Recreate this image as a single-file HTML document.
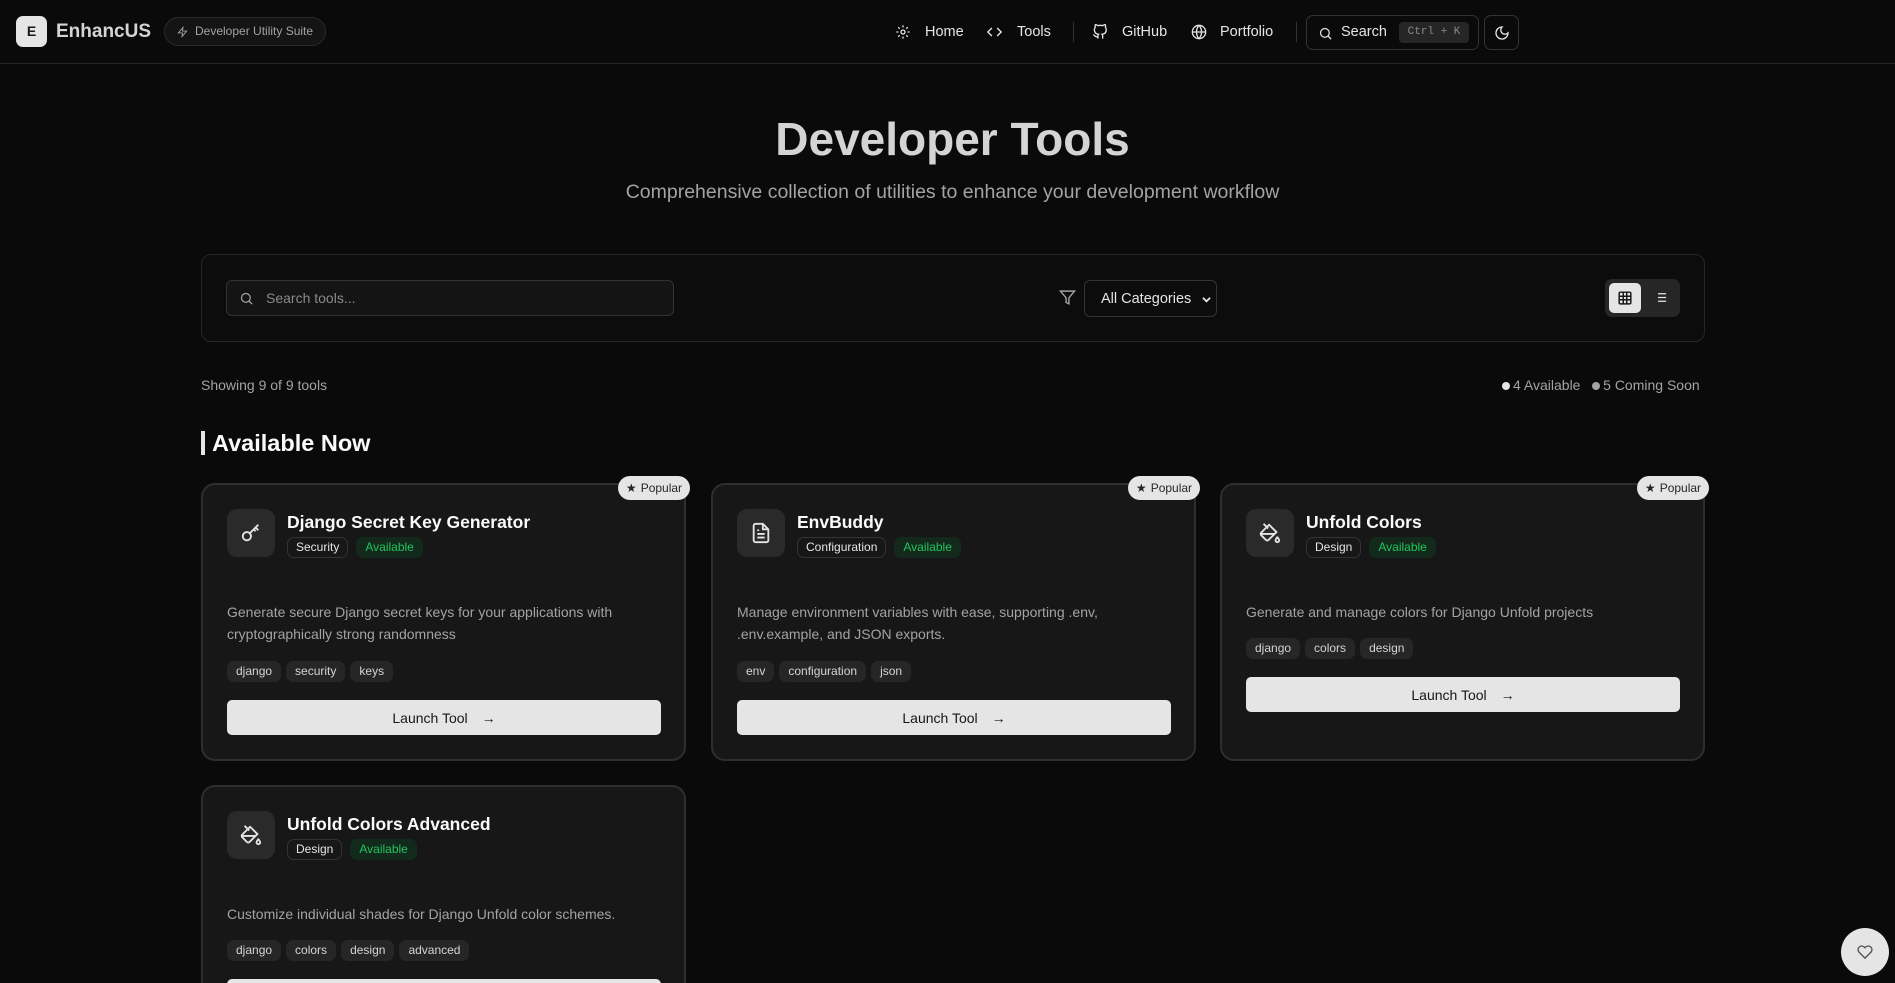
<!DOCTYPE html>
<html><head><meta charset="utf-8"><style>
*{box-sizing:border-box;margin:0;padding:0}
html{width:1895px;height:983px;overflow:hidden}
body{width:1895px;height:983px;overflow:hidden;background:#0a0a0a;font-family:"Liberation Sans",sans-serif;color:#e5e5e5;position:relative}
.hdr{position:absolute;left:0;top:0;width:1895px;height:64px;border-bottom:1px solid #262626;background:#0a0a0a}
.abs{position:absolute}
svg{display:block}
.nav{position:absolute;top:24px;font-size:14.5px;color:#e5e5e5}
.card{position:absolute;width:485px;background:#171717;border:2px solid #2e2e2e;border-radius:14px}
.ib{position:absolute;left:24px;top:24px;width:48px;height:48px;background:#2a2a2a;border-radius:10px;display:flex;align-items:center;justify-content:center}
.ct{position:absolute;left:84px;top:27px;font-size:17.5px;font-weight:bold;color:#fafafa}
.bd{position:absolute;top:52px;left:84px;display:flex;gap:8px}
.b1{font-size:12px;border:1px solid #333;border-radius:7px;padding:2px 8px;color:#e5e5e5;height:21px}
.b2{font-size:12px;background:#13291b;border-radius:7px;padding:3px 9px;color:#22c55e;height:21px}
.ds{position:absolute;left:24px;top:116px;width:440px;font-size:14px;line-height:22px;color:#a3a3a3}
.tg{position:absolute;left:24px;display:flex;gap:5px}
.tg span{font-size:12px;background:#262626;border-radius:7px;padding:3px 9px;color:#d4d4d4;height:21px}
.btn{position:absolute;left:24px;width:434px;height:35px;background:#e5e5e5;border-radius:5px;color:#171717;font-size:14px;display:flex;align-items:center;justify-content:center;gap:14px}
.pop{position:absolute;right:-6px;top:-9px;width:72px;height:24px;background:#e5e5e5;border-radius:12px;color:#262626;font-size:12px;display:flex;align-items:center;justify-content:center;gap:4px}
</style></head><body>
<div class="hdr"></div>
<div class="abs" style="left:16px;top:16px;width:31px;height:31px;background:#e5e5e5;border-radius:7px;color:#171717;font-weight:bold;font-size:14px;text-align:center;line-height:31px">E</div>
<div class="abs" style="left:56px;top:21px;font-size:19px;font-weight:bold;color:#d4d4d4">EnhancUS</div>
<div class="abs" style="left:164px;top:17px;width:162px;height:29px;border:1px solid #2a2a2a;background:#141414;border-radius:15px;font-size:12px;color:#a3a3a3;line-height:27px;padding-left:30px">Developer Utility Suite
<svg class="abs" style="left:12px;top:8px" width="11" height="12" viewBox="0 0 24 24" fill="none" stroke="#a3a3a3" stroke-width="2"><path d="M13 2L3 14h9l-1 8 10-12h-9l1-8z"/></svg></div>

<svg class="abs" style="left:895px;top:24px" width="16" height="16" viewBox="0 0 24 24" fill="none" stroke="#e5e5e5" stroke-width="2"><circle cx="12" cy="12" r="3"/><path d="M12 2v3M12 19v3M4.9 4.9l2.1 2.1M17 17l2.1 2.1M2 12h3M19 12h3M4.9 19.1L7 17M17 7l2.1-2.1"/></svg>
<div class="nav" style="left:925px">Home</div>
<svg class="abs" style="left:986px;top:24px" width="17" height="16" viewBox="0 0 24 24" fill="none" stroke="#e5e5e5" stroke-width="2"><path d="M8 6l-6 6 6 6M16 6l6 6-6 6"/></svg>
<div class="nav" style="left:1017px">Tools</div>
<div class="abs" style="left:1073px;top:22px;width:1px;height:20px;background:#333"></div>
<svg class="abs" style="left:1092px;top:24px" width="16" height="16" viewBox="0 0 24 24" fill="none" stroke="#e5e5e5" stroke-width="2"><path d="M9 19c-5 1.5-5-2.5-7-3m14 6v-3.9a3.4 3.4 0 0 0-1-2.6c3.1-.3 6.4-1.5 6.4-7A5.4 5.4 0 0 0 20 4.8 5 5 0 0 0 19.9 1S18.7.6 16 2.5a13.4 13.4 0 0 0-7 0C6.3.6 5.1 1 5.1 1A5 5 0 0 0 5 4.8a5.4 5.4 0 0 0-1.5 3.7c0 5.4 3.3 6.6 6.4 7a3.4 3.4 0 0 0-1 2.6V22"/></svg>
<div class="nav" style="left:1122px">GitHub</div>
<svg class="abs" style="left:1191px;top:24px" width="16" height="16" viewBox="0 0 24 24" fill="none" stroke="#e5e5e5" stroke-width="2"><circle cx="12" cy="12" r="10"/><path d="M2 12h20M12 2a15 15 0 0 1 0 20M12 2a15 15 0 0 0 0 20"/></svg>
<div class="nav" style="left:1220px">Portfolio</div>
<div class="abs" style="left:1296px;top:22px;width:1px;height:20px;background:#333"></div>
<div class="abs" style="left:1306px;top:15px;width:173px;height:35px;border:1px solid #333;border-radius:7px;font-size:14.5px;line-height:33px;padding-left:34px;color:#e5e5e5">Search
<span class="abs" style="left:92px;top:6px;height:21px;width:70px;background:#262626;border-radius:4px;font-family:'Liberation Mono',monospace;font-size:11px;line-height:21px;color:#8a8a8a;text-align:center">Ctrl + K</span>
<svg class="abs" style="left:11px;top:10px" width="15" height="15" viewBox="0 0 24 24" fill="none" stroke="#e5e5e5" stroke-width="2"><circle cx="11" cy="11" r="7"/><path d="M21 21l-5-5"/></svg></div>
<div class="abs" style="left:1484px;top:15px;width:35px;height:35px;border:1px solid #333;border-radius:7px"><svg class="abs" style="left:9px;top:9px" width="16" height="16" viewBox="0 0 24 24" fill="none" stroke="#e5e5e5" stroke-width="2"><path d="M12 3a6 6 0 0 0 9 9 9 9 0 1 1-9-9z"/></svg></div>

<div class="abs" style="left:0;width:1905px;top:112px;text-align:center;font-size:46px;font-weight:bold;color:#d4d4d4">Developer Tools</div>
<div class="abs" style="left:0;width:1905px;top:181px;text-align:center;font-size:19.5px;color:#a3a3a3">Comprehensive collection of utilities to enhance your development workflow</div>

<div class="abs" style="left:201px;top:254px;width:1504px;height:88px;border:1px solid #262626;border-radius:10px;background:#0c0c0c"></div>
<div class="abs" style="left:226px;top:280px;width:448px;height:36px;border:1px solid #333;border-radius:6px;background:#141414;font-size:14px;color:#8a8a8a;line-height:34px;padding-left:39px">Search tools...
<svg class="abs" style="left:12px;top:10px" width="15" height="15" viewBox="0 0 24 24" fill="none" stroke="#a3a3a3" stroke-width="2"><circle cx="11" cy="11" r="7"/><path d="M21 21l-5-5"/></svg></div>
<svg class="abs" style="left:1059px;top:289px" width="17" height="17" viewBox="0 0 24 24" fill="none" stroke="#a3a3a3" stroke-width="2"><path d="M22 3H2l8 9.5V19l4 2v-8.5L22 3z"/></svg>
<div class="abs" style="left:1084px;top:280px;width:133px;height:37px;border:1px solid #333;border-radius:6px;font-size:14.5px;line-height:37px;padding-left:16px;color:#e5e5e5">All Categories
<svg class="abs" style="left:117px;top:15px" width="9" height="7" viewBox="0 0 10 6"><path d="M1 1l4 4 4-4" stroke="#e5e5e5" stroke-width="2" fill="none"/></svg></div>
<div class="abs" style="left:1605px;top:279px;width:75px;height:38px;background:#262626;border-radius:7px"></div>
<div class="abs" style="left:1609px;top:283px;width:32px;height:30px;background:#e5e5e5;border-radius:5px"><svg class="abs" style="left:9px;top:8px" width="14" height="14" viewBox="0 0 24 24" fill="none" stroke="#171717" stroke-width="2.5"><rect x="2" y="2" width="20" height="20" rx="2"/><path d="M2 9h20M2 15h20M9 2v20M15 2v20"/></svg></div>
<svg class="abs" style="left:1653px;top:290px" width="15" height="15" viewBox="0 0 24 24" fill="none" stroke="#e5e5e5" stroke-width="2"><path d="M8 6h13M8 12h13M8 18h13M3 6h.01M3 12h.01M3 18h.01"/></svg>

<div class="abs" style="left:201px;top:377px;font-size:14px;color:#a3a3a3">Showing 9 of 9 tools</div>
<div class="abs" style="left:1502px;top:377px;font-size:14px;color:#a3a3a3"><span style="display:inline-block;width:8px;height:8px;border-radius:50%;background:#e5e5e5;margin-right:3px"></span>4 Available &nbsp;&nbsp;<span style="display:inline-block;width:8px;height:8px;border-radius:50%;background:#a3a3a3;margin-right:3px"></span>5 Coming Soon</div>

<div class="abs" style="left:201px;top:431px;width:4px;height:24px;background:#e5e5e5"></div>
<div class="abs" style="left:212px;top:430px;font-size:23.5px;font-weight:bold;color:#fafafa">Available Now</div>

<div class="card" style="left:201px;top:483px;height:278px">
<div class="pop"><span>★</span>Popular</div>
<div class="ib"><svg width="22" height="22" viewBox="0 0 24 24" fill="none" stroke="#e5e5e5" stroke-width="2"><circle cx="7.5" cy="15.5" r="4.5"/><path d="M11 12l9-9M17 6l3 3M15 8l2 2"/></svg></div>
<div class="ct">Django Secret Key Generator</div>
<div class="bd"><span class="b1">Security</span><span class="b2">Available</span></div>
<div class="ds">Generate secure Django secret keys for your applications with cryptographically strong randomness</div>
<div class="tg" style="top:176px"><span>django</span><span>security</span><span>keys</span></div>
<div class="btn" style="top:215px">Launch Tool <span>→</span></div>
</div>
<div class="card" style="left:711px;top:483px;height:278px">
<div class="pop"><span>★</span>Popular</div>
<div class="ib"><svg width="22" height="22" viewBox="0 0 24 24" fill="none" stroke="#e5e5e5" stroke-width="2"><path d="M14 2H6a2 2 0 0 0-2 2v16a2 2 0 0 0 2 2h12a2 2 0 0 0 2-2V8z"/><path d="M14 2v6h6M16 13H8M16 17H8M10 9H8"/></svg></div>
<div class="ct">EnvBuddy</div>
<div class="bd"><span class="b1">Configuration</span><span class="b2">Available</span></div>
<div class="ds">Manage environment variables with ease, supporting .env, .env.example, and JSON exports.</div>
<div class="tg" style="top:176px"><span>env</span><span>configuration</span><span>json</span></div>
<div class="btn" style="top:215px">Launch Tool <span>→</span></div>
</div>
<div class="card" style="left:1220px;top:483px;height:278px">
<div class="pop"><span>★</span>Popular</div>
<div class="ib"><svg width="22" height="22" viewBox="0 0 24 24" fill="none" stroke="#e5e5e5" stroke-width="2"><path d="M19 11l-8-8-8.6 8.6a2 2 0 0 0 0 2.8l5.2 5.2a2 2 0 0 0 2.8 0z"/><path d="M5 2l5 5M2 13h15M22 20a2 2 0 1 1-4 0c0-1.6 1.7-2.4 2-4 .3 1.6 2 2.4 2 4z"/></svg></div>
<div class="ct">Unfold Colors</div>
<div class="bd"><span class="b1">Design</span><span class="b2">Available</span></div>
<div class="ds">Generate and manage colors for Django Unfold projects</div>
<div class="tg" style="top:153px"><span>django</span><span>colors</span><span>design</span></div>
<div class="btn" style="top:192px">Launch Tool <span>→</span></div>
</div>
<div class="card" style="left:201px;top:785px;height:240px">
<div class="ib"><svg width="22" height="22" viewBox="0 0 24 24" fill="none" stroke="#e5e5e5" stroke-width="2"><path d="M19 11l-8-8-8.6 8.6a2 2 0 0 0 0 2.8l5.2 5.2a2 2 0 0 0 2.8 0z"/><path d="M5 2l5 5M2 13h15M22 20a2 2 0 1 1-4 0c0-1.6 1.7-2.4 2-4 .3 1.6 2 2.4 2 4z"/></svg></div>
<div class="ct">Unfold Colors Advanced</div>
<div class="bd"><span class="b1">Design</span><span class="b2">Available</span></div>
<div class="ds">Customize individual shades for Django Unfold color schemes.</div>
<div class="tg" style="top:153px"><span>django</span><span>colors</span><span>design</span><span>advanced</span></div>
<div class="btn" style="top:192px">Launch Tool <span>→</span></div>
</div>

<div class="abs" style="left:1841px;top:928px;width:48px;height:48px;border-radius:50%;background:#e5e5e5"><svg class="abs" style="left:16px;top:16px" width="16" height="16" viewBox="0 0 24 24" fill="none" stroke="#525252" stroke-width="2"><path d="M20.8 4.6a5.5 5.5 0 0 0-7.8 0L12 5.7l-1-1.1a5.5 5.5 0 0 0-7.8 7.8L12 21.2l8.8-8.8a5.5 5.5 0 0 0 0-7.8z"/></svg></div>
</body></html>
